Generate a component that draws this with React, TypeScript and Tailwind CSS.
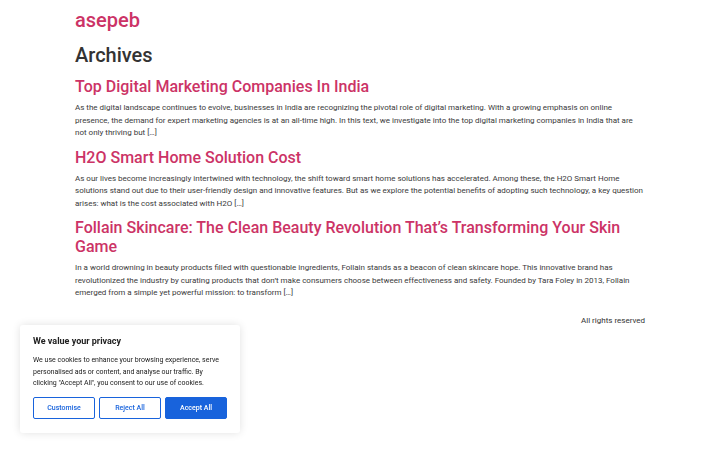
const posts = [
  {
    title: 'Top Digital Marketing Companies In India',
    excerpt:
      'As the digital landscape continues to evolve, businesses in India are recognizing the pivotal role of digital marketing. With a growing emphasis on online presence, the demand for expert marketing agencies is at an all-time high. In this text, we investigate into the top digital marketing companies in India that are not only thriving but […]',
  },
  {
    title: 'H2O Smart Home Solution Cost',
    excerpt:
      'As our lives become increasingly intertwined with technology, the shift toward smart home solutions has accelerated. Among these, the H2O Smart Home solutions stand out due to their user-friendly design and innovative features. But as we explore the potential benefits of adopting such technology, a key question arises: what is the cost associated with H2O […]',
  },
  {
    title: 'Follain Skincare: The Clean Beauty Revolution That’s Transforming Your Skin Game',
    excerpt:
      'In a world drowning in beauty products filled with questionable ingredients, Follain stands as a beacon of clean skincare hope. This innovative brand has revolutionized the industry by curating products that don’t make consumers choose between effectiveness and safety. Founded by Tara Foley in 2013, Follain emerged from a simple yet powerful mission: to transform […]',
  },
];

function CookieBanner() {
  return (
    <div className="fixed left-[20px] bottom-[17px] w-[220px] bg-white rounded-[3px] px-[13px] pt-[10px] pb-[14px] shadow-[0_0_8px_rgba(0,0,0,0.12)]">
      <p className="text-[9px] font-bold text-[#212121] leading-[13px] mb-[7px]">We value your privacy</p>
      <p className="text-[7px] leading-[11.5px] text-[#212121] mb-[7.5px]">
        We use cookies to enhance your browsing experience, serve personalised ads or content, and analyse our traffic. By
        clicking "Accept All", you consent to our use of cookies.
      </p>
      <div className="flex gap-[4px]">
        <button className="flex-1 h-[22px] border-[1.5px] border-[#1863dc] rounded-[2px] text-[7px] font-medium text-[#1863dc] bg-white">
          Customise
        </button>
        <button className="flex-1 h-[22px] border-[1.5px] border-[#1863dc] rounded-[2px] text-[7px] font-medium text-[#1863dc] bg-white">
          Reject All
        </button>
        <button className="flex-1 h-[22px] border-[1.5px] border-[#1863dc] rounded-[2px] text-[7px] font-medium text-white bg-[#1863dc]">
          Accept All
        </button>
      </div>
    </div>
  );
}

export default function App() {
  return (
    <div className="min-h-[450px] bg-white text-[#333] font-['Roboto',sans-serif]">
      <div className="mx-auto w-[570px] pt-[8px]">
        <header>
          <p className="text-[20px] leading-[24px] font-medium text-[#cc3366]">asepeb</p>
        </header>
        <main>
          <h1 className="text-[20px] leading-[24px] font-medium text-[#333] mt-[11px] mb-[10px]">Archives</h1>
          {posts.map((post) => (
            <article key={post.title} className="mb-[8px]">
              <h2 className="text-[16px] leading-[19px] font-medium text-[#cc3366] mb-[6px]">{post.title}</h2>
              <p className="text-[8px] leading-[12.5px] text-[#3a3a3a]">{post.excerpt}</p>
            </article>
          ))}
        </main>
        <footer className="flex justify-end pt-[7px]">
          <p className="text-[8px] leading-[12px] text-[#333]">All rights reserved</p>
        </footer>
      </div>
      <CookieBanner />
    </div>
  );
}
